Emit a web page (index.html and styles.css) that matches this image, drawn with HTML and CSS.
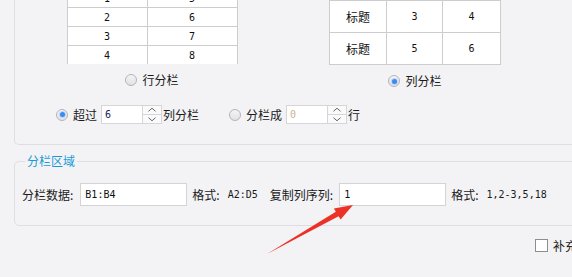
FILE: index.html
```html
<!DOCTYPE html>
<html>
<head>
<meta charset="utf-8">
<title>分栏</title>
<link rel="stylesheet" href="styles.css">
</head>
<body>
<div class="screen">

<section class="panel">
	<div class="previews">
		<div class="preview">
			<table class="grid rows">
				<tr><td>1</td><td>5</td></tr>
				<tr><td>2</td><td>6</td></tr>
				<tr><td>3</td><td>7</td></tr>
				<tr><td>4</td><td>8</td></tr>
			</table>
			<label class="radio"><span class="dot"></span>行分栏</label>
		</div>
		<div class="preview">
			<table class="grid cols">
				<tr><td class="cjk">标题</td><td>3</td><td>4</td></tr>
				<tr><td class="cjk">标题</td><td>5</td><td>6</td></tr>
			</table>
			<label class="radio"><span class="dot on"></span>列分栏</label>
		</div>
	</div>

	<div class="options">
		<label class="radio"><span class="dot on"></span>超过</label>
		<span class="spin"><span class="spin-text">6</span><span class="spin-btns">
			<svg width="20" height="9" viewBox="0 0 20 9"><polyline points="6,6 10,2.5 14,6" /></svg>
			<svg width="20" height="9" viewBox="0 0 20 9"><polyline points="6,3 10,6.5 14,3" /></svg>
		</span></span>
		<span class="after">列分栏</span>
		<label class="radio second"><span class="dot"></span>分栏成</label>
		<span class="spin off"><span class="spin-text">0</span><span class="spin-btns">
			<svg width="20" height="9" viewBox="0 0 20 9"><polyline points="6,6 10,2.5 14,6" /></svg>
			<svg width="20" height="9" viewBox="0 0 20 9"><polyline points="6,3 10,6.5 14,3" /></svg>
		</span></span>
		<span class="after">行</span>
	</div>
</section>

<fieldset class="group">
	<legend>分栏区域</legend>
	<div class="fields">
		<span class="label">分栏数据:</span>
		<span class="field wide-a">B1:B4</span>
		<span class="label hint">格式:</span>
		<span class="code">A2:D5</span>
		<span class="label copy">复制列序列:</span>
		<span class="field wide-b">1</span>
		<span class="label hint">格式:</span>
		<span class="code">1,2-3,5,18</span>
	</div>
</fieldset>

<div class="extra">
	<label class="check"><span class="box"></span>补充</label>
</div>

<svg class="arrow" width="572" height="277" viewBox="0 0 572 277">
	<polygon points="267,254 338.6,216.3 340.6,219.6 353,205 333.9,208.5 335.8,211.8" />
</svg>

</div>
</body>
</html>
```

FILE: styles.css
```css
html, body {
margin:0; padding:0;
background:#f3f3f5;
overflow:hidden; }

.screen {
position:relative;
width:572px; height:277px;
overflow:hidden;
font-family:"Noto Sans CJK SC", "Liberation Sans", sans-serif;
font-size:12px;
color:#1a1a1a; }

/* top box with the two previews */
.panel {
margin-left:14px;
width:640px; height:144px;
border:1px solid #dedee2;
border-top:none;
border-radius:0 0 0 5px; }

.previews {
display:grid;
grid-template-columns:274px 252px; }

.preview {
display:flex;
flex-direction:column;
align-items:center; }

.grid {
border-collapse:collapse;
background:#fff;
font-family:"DejaVu Sans Mono", monospace;
font-size:10px;
color:#111; }
.grid td {
border:1px solid #cdcdcd;
text-align:center;
padding:0; }
.grid .cjk {
font-family:"Noto Sans CJK SC", sans-serif;
font-size:12px; }

.rows { margin-top:-12px; }
.rows td { height:18px; }
.rows td:first-child { width:79px; }
.rows td:last-child { width:89px; }
.rows tr:last-child td { border-bottom:none; }

.cols td { height:31px; }
.cols td:nth-child(1) { width:56px; }
.cols td:nth-child(2) { width:55px; }
.cols td:nth-child(3) { width:57px; }

.radio {
display:flex;
align-items:center;
gap:5px;
height:16px;
line-height:16px; }
.preview .radio { margin-top:8px; }

.dot {
flex-shrink:0;
width:10px; height:10px;
border:1px solid #b4b4b8;
border-radius:50%;
background:linear-gradient(#f4f4f4, #e2e2e4);
display:flex;
align-items:center;
justify-content:center; }
.dot.on::after {
content:"";
width:5px; height:5px;
border-radius:50%;
background:#3c8af0;
box-shadow:0 0 0 1px #bcd6fa; }

.options {
display:flex;
align-items:center;
height:19px;
margin-top:16px;
padding-left:41px; }
.options .radio { margin-right:4px; }
.options .second { margin-left:30px; }

.spin {
display:flex;
height:19px; }
.spin-text {
border:1px solid #d6d6d8;
border-right:none;
background:#fff;
font-family:"DejaVu Sans Mono", monospace;
font-size:10px;
line-height:17px;
padding-left:3px;
box-sizing:border-box;
width:41px;
color:#201a60; }
.spin.off .spin-text { color:#d0b090; }
.spin-btns {
display:flex;
flex-direction:column;
width:20px;
border:1px solid #d6d6d8;
box-sizing:border-box;
background:#fafafa; }
.spin-btns svg {
display:block;
width:18px; height:8px;
fill:none;
stroke:#555;
stroke-width:1; }
.spin-btns svg:first-child { border-bottom:1px solid #d6d6d8; }
.after { margin-left:1px; }

/* range group */
.group {
margin:8px 0 0 14px;
width:640px;
padding:14px 0 18px 7px;
border:1px solid #dedee2;
border-radius:5px;
box-sizing:border-box;
height:73px; }
.group legend {
color:#1b9ad8;
padding:0 2px;
margin-left:3px;
line-height:16px; }

.fields {
display:flex;
align-items:center;
height:23px; }
.label { white-space:nowrap; }
.field {
height:23px;
box-sizing:border-box;
border:1px solid #d4d4d6;
background:#fff;
font-family:"DejaVu Sans Mono", monospace;
font-size:10px;
line-height:21px;
padding-left:4px;
color:#111; }
.wide-a { width:107px; margin-left:7px; }
.wide-b { width:107px; margin-left:6px; }
.hint { margin-left:5px; }
.code {
font-family:"DejaVu Sans Mono", monospace;
font-size:10px;
margin-left:8px; }
.copy { margin-left:12px; }

.extra {
margin-top:13px;
padding-left:535px; }
.check {
display:flex;
align-items:center;
gap:5px;
height:13px;
white-space:nowrap; }
.box {
flex-shrink:0;
width:11px; height:11px;
border:1px solid #8e8e92;
background:#fff; }

.arrow {
position:absolute;
left:0; top:0;
fill:#ec3127; }
```
